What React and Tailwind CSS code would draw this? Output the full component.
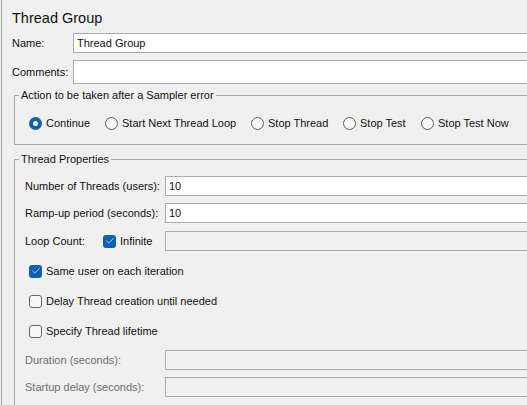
import { Check } from "lucide-react";

const font = { fontFamily: '"Liberation Sans", Arial, sans-serif' };

function TextBox({ value = "", disabled = false, tall = false }) {
  return (
    <div
      className={`flex-1 border border-[#ababab] pl-[3px] flex items-center text-[11px] text-[#111] ${
        tall ? "h-6" : "h-5"
      } ${disabled ? "bg-[#f0f0f0]" : "bg-white"}`}
    >
      {value}
    </div>
  );
}

function Radio({ checked }) {
  if (checked) {
    return (
      <span className="w-[13px] h-[13px] rounded-full bg-[#0f5fb5] flex items-center justify-center shrink-0">
        <span className="w-[5px] h-[5px] rounded-full bg-white" />
      </span>
    );
  }
  return (
    <span className="w-[13px] h-[13px] rounded-full border border-[#5f5f5f] bg-[#f7f7f7] shrink-0" />
  );
}

function Checkbox({ checked }) {
  if (checked) {
    return (
      <span className="w-[13px] h-[13px] rounded-[3px] bg-[#0f5fb5] flex items-center justify-center shrink-0">
        <Check size={10} strokeWidth={1.6} className="text-white" />
      </span>
    );
  }
  return (
    <span className="w-[13px] h-[13px] rounded-[3px] border border-[#666] bg-[#f7f7f7] shrink-0" />
  );
}

function Group({ title, className = "", children }) {
  return (
    <fieldset className={`border border-[#a9a9a9] ml-[2px] ${className}`}>
      <legend className="ml-[4px] px-[2px] text-[11px] leading-4 text-[#111] whitespace-nowrap">{title}</legend>
      {children}
    </fieldset>
  );
}

function Field({ label, value, disabled }) {
  return (
    <div className="flex items-center">
      <span
        className={`w-[140px] shrink-0 whitespace-nowrap text-[11px] ${
          disabled ? "text-[#6e6e6e]" : "text-[#111]"
        }`}
      >
        {label}
      </span>
      <TextBox value={value} disabled={disabled} />
    </div>
  );
}

function CheckRow({ label, checked, className = "" }) {
  return (
    <div
      className={`flex items-center h-4 pl-[4px] gap-[4px] text-[11px] text-[#111] whitespace-nowrap ${className}`}
    >
      <Checkbox checked={checked} />
      <span>{label}</span>
    </div>
  );
}

export default function App() {
  const actions = [
    { label: "Continue", w: "w-[76px]", checked: true },
    { label: "Start Next Thread Loop", w: "w-[146px]" },
    { label: "Stop Thread", w: "w-[92px]" },
    { label: "Stop Test", w: "w-[78px]" },
    { label: "Stop Test Now", w: "w-[110px]" },
  ];

  return (
    <div className="w-[527px] h-[405px] overflow-hidden bg-[#f0f0f0] pl-px" style={font}>
      <div className="w-[620px] h-full border-l border-[#a0a0a0] pl-[10px] pt-2">
        <h1 className="h-5 text-[14.5px] leading-5 text-[#111]">Thread Group</h1>

        <div className="flex items-center mt-[5px]">
          <span className="w-[61px] shrink-0 text-[11px] text-[#111]">Name:</span>
          <TextBox value="Thread Group" />
        </div>
        <div className="flex items-center mt-[7px]">
          <span className="w-[61px] shrink-0 text-[11px] text-[#111]">Comments:</span>
          <TextBox tall />
        </div>

        <Group title="Action to be taken after a Sampler error" className="mt-[3px]">
          <div className="pt-[12px] pb-[13px] pl-[14px] flex">
            {actions.map((a) => (
              <div
                key={a.label}
                className={`${a.w} shrink-0 flex items-center gap-[4px] h-4 text-[11px] text-[#111] whitespace-nowrap`}
              >
                <Radio checked={a.checked} />
                <span>{a.label}</span>
              </div>
            ))}
          </div>
        </Group>

        <Group title="Thread Properties" className="mt-[6px] h-[300px]">
          <div className="pt-[9px] pl-[10px]">
            <Field label="Number of Threads (users):" value="10" />
            <div className="mt-[7px]">
              <Field label="Ramp-up period (seconds):" value="10" />
            </div>
            <div className="flex items-center mt-[8px]">
              <span className="w-[78px] shrink-0 text-[11px] text-[#111]">Loop Count:</span>
              <div className="w-[62px] shrink-0 flex items-center gap-[4px] text-[11px] text-[#111]">
                <Checkbox checked />
                <span>Infinite</span>
              </div>
              <TextBox disabled />
            </div>

            <CheckRow label="Same user on each iteration" checked className="mt-[12px]" />
            <CheckRow label="Delay Thread creation until needed" className="mt-[14px]" />
            <CheckRow label="Specify Thread lifetime" className="mt-[14px]" />

            <div className="mt-[11px]">
              <Field label="Duration (seconds):" disabled />
            </div>
            <div className="mt-[7px]">
              <Field label="Startup delay (seconds):" disabled />
            </div>
          </div>
        </Group>
      </div>
    </div>
  );
}
